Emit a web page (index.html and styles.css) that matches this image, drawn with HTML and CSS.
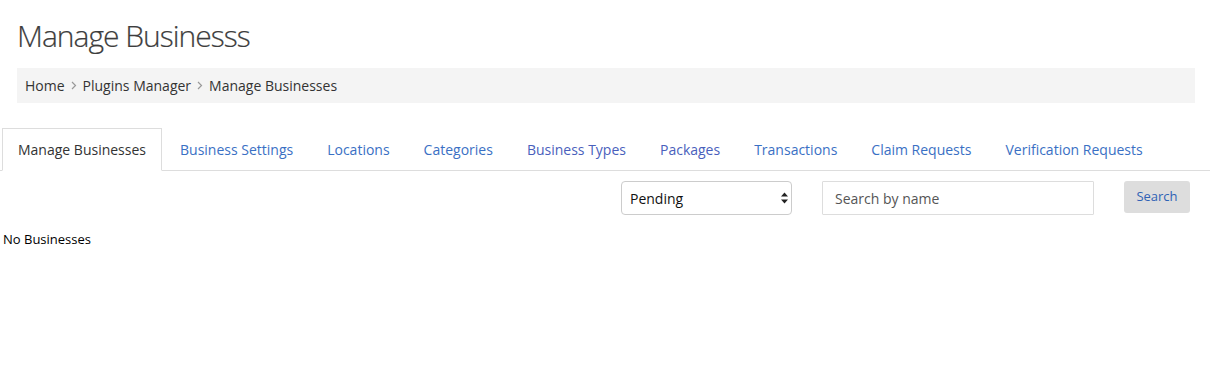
FILE: index.html
```html
<!DOCTYPE html>
<html lang="en">
<head>
    <meta charset="UTF-8">
    <meta name="viewport" content="width=device-width, initial-scale=1.0">
    <title>Manage Businesss</title>
    <link rel="stylesheet" href="styles.css">
</head>
<body>
    <div class="header">
        <h1 class="title">Manage Businesss</h1>
        <div class="breadcrumb">
            <a href="#">Home</a>
            <span class="sep"><svg width="6" height="9" viewBox="0 0 6 9"><path d="M1 1l3.5 3.5L1 8" fill="none" stroke="#999" stroke-width="1.2"/></svg></span>
            <a href="#">Plugins Manager</a>
            <span class="sep"><svg width="6" height="9" viewBox="0 0 6 9"><path d="M1 1l3.5 3.5L1 8" fill="none" stroke="#999" stroke-width="1.2"/></svg></span>
            <span>Manage Businesses</span>
        </div>
    </div>

    <ul class="tabs">
        <li class="tab active"><a href="#">Manage Businesses</a></li>
        <li class="tab"><a href="#">Business Settings</a></li>
        <li class="tab"><a href="#">Locations</a></li>
        <li class="tab"><a href="#">Categories</a></li>
        <li class="tab"><a href="#" class="visited">Business Types</a></li>
        <li class="tab"><a href="#" class="visited">Packages</a></li>
        <li class="tab"><a href="#">Transactions</a></li>
        <li class="tab"><a href="#">Claim Requests</a></li>
        <li class="tab"><a href="#">Verification Requests</a></li>
    </ul>

    <form class="filters">
        <div class="select-wrap">
            <select class="status-select">
                <option>Pending</option>
                <option>Approved</option>
                <option>Featured</option>
            </select>
            <svg class="select-arrows" width="7" height="12" viewBox="0 0 7 12"><path d="M3.5 0.5L7 4.5H0z M3.5 11.5L0 7.5h7z" fill="#222"/></svg>
        </div>
        <input class="search-input" type="text" placeholder="Search by name">
        <button class="search-button" type="button">Search</button>
    </form>

    <p class="empty">No Businesses</p>
</body>
</html>
```

FILE: styles.css
```css
* {
    margin: 0;
    padding: 0;
    box-sizing: border-box;
}

body {
    font-family: 'Open Sans', 'Liberation Sans', sans-serif;
    font-size: 14px;
    color: #333;
    background: #fff;
}

a {
    text-decoration: none;
}

.header {
    padding: 0 16px 0 17px;
}

.title {
    margin-top: 18px;
    font-size: 30px;
    line-height: 35px;
    font-weight: 300;
    color: #3d3d3d;
    letter-spacing: -1px;
    -webkit-text-stroke: 0.2px #3d3d3d;
}

.breadcrumb {
    margin-top: 15px;
    height: 35px;
    padding: 0 8px;
    background: #f4f4f4;
    display: flex;
    align-items: center;
    line-height: 20px;
    color: #333;
}

.breadcrumb a {
    color: #333;
}

.breadcrumb .sep {
    display: flex;
    align-items: center;
    padding: 0 6px;
}

.tabs {
    list-style: none;
    display: flex;
    margin: 25px 1px 0 0;
    padding-left: 2px;
    border-bottom: 1px solid #ddd;
}

.tab {
    margin-right: 2px;
    margin-bottom: -1px;
}

.tab a {
    display: block;
    padding: 11px 15px 10px;
    line-height: 20px;
    border: 1px solid transparent;
    color: #3a70c4;
}

.tab a.visited {
    color: #4a5fbc;
}

.tab.active a {
    color: #333;
    background: #fff;
    border-color: #ddd;
    border-bottom-color: #fff;
}

.filters {
    display: flex;
    justify-content: flex-end;
    align-items: flex-start;
    gap: 30px;
    margin-top: 10px;
    padding-right: 21px;
}

.select-wrap {
    position: relative;
}

.status-select {
    appearance: none;
    -webkit-appearance: none;
    width: 171px;
    height: 34px;
    padding: 0 20px 0 8px;
    border: 1px solid #ccc;
    border-radius: 4px;
    background: #fff;
    font-family: inherit;
    font-size: 14px;
    color: #111;
}

.select-arrows {
    position: absolute;
    right: 4px;
    top: 11px;
    pointer-events: none;
}

.search-input {
    width: 272px;
    height: 34px;
    padding: 0 12px;
    border: 1px solid #ddd;
    border-radius: 1px;
    font-family: inherit;
    font-size: 14px;
    color: #333;
}

.search-input::placeholder {
    color: #555;
}

.search-button {
    width: 66px;
    height: 32px;
    border: none;
    border-radius: 3px;
    background: #ddd;
    color: #2f62b5;
    font-family: inherit;
    font-size: 13px;
    padding-bottom: 2px;
}

.empty {
    margin-top: 15px;
    padding-left: 3px;
    font-size: 13px;
    line-height: 18px;
    color: #000;
}
```
